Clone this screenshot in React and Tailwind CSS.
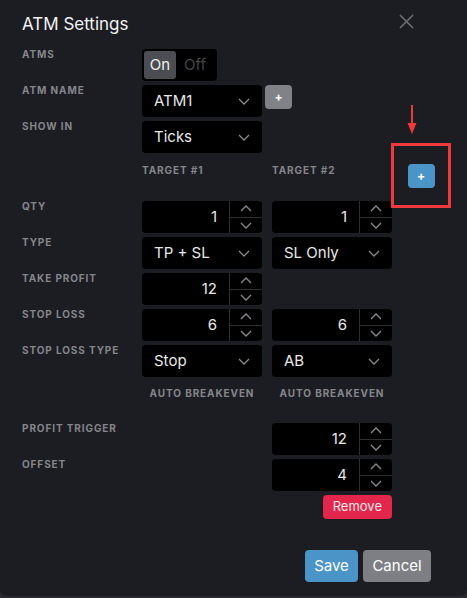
import React, { useState } from 'react';

const font = { fontFamily: 'Inter, "Noto Sans", sans-serif' };

function Chevron({ up = false, className = '' }) {
  return (
    <svg width="12" height="7" viewBox="0 0 12 7" className={className}>
      <path
        d={up ? 'M1 6 L6 1 L11 6' : 'M1 1 L6 6 L11 1'}
        fill="none"
        stroke="#8a8b90"
        strokeWidth="1.3"
      />
    </svg>
  );
}

function Label({ children }) {
  return (
    <div className="text-[10px] font-bold uppercase tracking-[0.09em] leading-[10px] text-[#85868b]">
      {children}
    </div>
  );
}

function Select({ value }) {
  return (
    <div className="flex h-8 w-[120px] items-center justify-between rounded bg-black pl-3 pr-3 text-[15px] text-[#e8e8e8]">
      <span>{value}</span>
      <Chevron />
    </div>
  );
}

function NumberInput({ value }) {
  return (
    <div className="flex h-8 w-[120px] rounded bg-black text-[15px] text-[#e8e8e8]">
      <div className="flex flex-1 items-center justify-end pr-3">{value}</div>
      <div className="flex w-[33px] flex-col border-l border-[#2e2f33]">
        <div className="flex flex-1 items-center justify-center border-b border-[#2e2f33]">
          <Chevron up />
        </div>
        <div className="flex flex-1 items-center justify-center">
          <Chevron />
        </div>
      </div>
    </div>
  );
}

function Row({ label, children, className = 'mb-1' }) {
  return (
    <div className={`grid grid-cols-[110px_120px_120px] gap-x-[10px] ${className}`}>
      <Label>{label}</Label>
      {children}
    </div>
  );
}

export default function App() {
  const [atmOn, setAtmOn] = useState(true);

  return (
    <div className="h-[598px] w-[467px] bg-[#2a2b30]" style={font}>
      <div className="relative h-[596px] w-[467px] rounded-b-md bg-[#1c1d22] px-[22px] pt-[13px]">
        <div className="flex items-start justify-between">
          <h1 className="text-[17px] leading-[22px] text-[#f2f2f2]">ATM Settings</h1>
          <button className="mr-[31px] mt-[1px]" aria-label="Close">
            <svg width="15" height="15" viewBox="0 0 15 15">
              <path d="M1 1 L14 14 M14 1 L1 14" stroke="#6e6f73" strokeWidth="1.6" />
            </svg>
          </button>
        </div>

        <div className="mt-[14px]">
          <Row label="Atms">
            <div className="flex h-8 w-[75px] items-center gap-[3px] rounded bg-black p-[2px] text-[15px]">
              <button
                onClick={() => setAtmOn(true)}
                className={`h-7 w-8 rounded-[3px] ${atmOn ? 'bg-[#4b4d53] text-[#f0f0f0]' : 'text-[#45464a]'}`}
              >
                On
              </button>
              <button
                onClick={() => setAtmOn(false)}
                className={`h-7 w-8 rounded-[3px] ${!atmOn ? 'bg-[#4b4d53] text-[#f0f0f0]' : 'text-[#45464a]'}`}
              >
                Off
              </button>
            </div>
          </Row>
          <Row label="Atm Name">
            <div className="col-span-2 flex items-start gap-[3px]">
              <Select value="ATM1" />
              <button className="flex h-6 w-[27px] items-center justify-center rounded bg-[#808288] text-[12px] font-bold text-white">
                +
              </button>
            </div>
          </Row>
          <Row label="Show In">
            <Select value="Ticks" />
          </Row>

          <div className="relative grid h-[44px] grid-cols-[110px_120px_120px] gap-x-[10px] pt-[7px]">
            <div />
            <div className="text-[10px] font-bold uppercase leading-[12px] tracking-[0.09em] text-[#85868b]">Target #1</div>
            <div className="text-[10px] font-bold uppercase leading-[12px] tracking-[0.09em] text-[#85868b]">Target #2</div>
            <div className="absolute left-[369px] top-[-14px] flex h-[65px] w-[60px] items-center justify-center border-[3px] border-[#f0393c]">
              <button className="flex h-6 w-[27px] items-center justify-center rounded bg-[#4a94c8] text-[12px] font-bold text-white">
                +
              </button>
            </div>
            <svg className="absolute left-[385px] top-[-52px]" width="10" height="30" viewBox="0 0 10 30">
              <path d="M5 0 L5 20" stroke="#f0393c" strokeWidth="2" />
              <path d="M0.5 18 L5 29 L9.5 18 Z" fill="#f0393c" />
            </svg>
          </div>

          <Row label="Qty">
            <NumberInput value="1" />
            <NumberInput value="1" />
          </Row>
          <Row label="Type">
            <Select value="TP + SL" />
            <Select value="SL Only" />
          </Row>
          <Row label="Take Profit">
            <NumberInput value="12" />
          </Row>
          <Row label="Stop Loss">
            <NumberInput value="6" />
            <NumberInput value="6" />
          </Row>
          <Row label="Stop Loss Type">
            <Select value="Stop" />
            <Select value="AB" />
          </Row>

          <div className="grid h-[42px] grid-cols-[110px_120px_120px] gap-x-[10px] pt-[6px]">
            <div />
            <div className="text-center text-[10px] font-bold uppercase leading-[12px] tracking-[0.09em] text-[#85868b]">Auto Breakeven</div>
            <div className="text-center text-[10px] font-bold uppercase leading-[12px] tracking-[0.09em] text-[#85868b]">Auto Breakeven</div>
          </div>

          <Row label="Profit Trigger">
            <div />
            <NumberInput value="12" />
          </Row>
          <Row label="Offset">
            <div />
            <NumberInput value="4" />
          </Row>
          <div className="grid grid-cols-[110px_120px_120px] gap-x-[10px]">
            <div />
            <div />
            <div className="flex justify-end">
              <button className="h-6 rounded bg-[#e3264b] px-[10px] text-[13px] text-[#fbe9ec]">Remove</button>
            </div>
          </div>
        </div>

        <div className="mt-[31px] flex justify-end gap-[5px] pr-[14px]">
          <button className="h-8 w-[53px] rounded bg-[#4a94c8] text-[15px] text-white">Save</button>
          <button className="h-8 w-[68px] rounded bg-[#7d7f85] text-[15px] text-white">Cancel</button>
        </div>
      </div>
    </div>
  );
}
